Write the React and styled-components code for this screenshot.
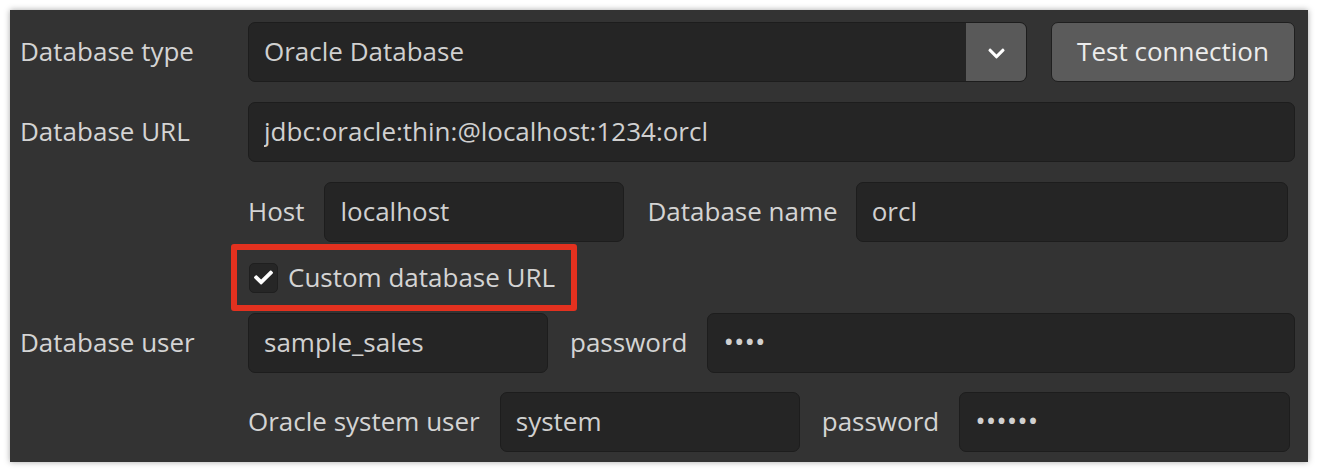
import React from 'react';
import styled, { createGlobalStyle } from 'styled-components';
import { FaCheck, FaChevronDown } from 'react-icons/fa';

const GlobalStyle = createGlobalStyle`
  html, body {
    margin: 0;
    padding: 0;
    background: #ffffff;
  }
  * {
    box-sizing: border-box;
  }
`;

const Panel = styled.div`
  margin: 10px;
  width: 1298px;
  height: 452px;
  background: #333333;
  box-shadow: 0 0 6px rgba(0, 0, 0, 0.35);
  padding: 12px 13px 10px 10px;
  display: flex;
  flex-direction: column;
  font-family: 'Open Sans', 'Liberation Sans', sans-serif;
  font-size: 26px;
  color: #d2d2d2;
`;

const Row = styled.div`
  display: grid;
  grid-template-columns: 228px minmax(0, 1fr);
  align-items: center;
  height: 60px;
  margin-top: ${(p) => p.$gap ?? 20}px;
`;

const RowLabel = styled.div`
  color: #d4d4d4;
  white-space: nowrap;
  padding-bottom: 2px;
`;

const Fields = styled.div`
  display: flex;
  align-items: center;
  height: 100%;
  min-width: 0;
  margin-right: ${(p) => p.$inset || 0}px;
`;

const InlineLabel = styled.span`
  color: #d4d4d4;
  white-space: nowrap;
  margin-left: ${(p) => p.$gap ?? 22}px;
  margin-right: ${(p) => p.$after ?? 20}px;
  padding-bottom: 2px;

  &:first-child {
    margin-left: 0;
  }
`;

const Input = styled.input`
  height: 100%;
  width: ${(p) => (p.$width ? `${p.$width}px` : '0')};
  flex: ${(p) => (p.$width ? '0 0 auto' : '1 1 0')};
  min-width: 0;
  background: #252525;
  border: 1px solid #1d1d1d;
  border-radius: 7px;
  padding: 0 15px 2px;
  font: inherit;
  color: #d0d0d0;
  outline: none;
`;

const Dots = styled(Input)`
  font-size: 28px;
  letter-spacing: 0;
  padding-bottom: 5px;
`;

const Select = styled.div`
  flex: 1 1 0;
  height: 100%;
  display: flex;
  background: #252525;
  border: 1px solid #1d1d1d;
  border-radius: 7px;
  overflow: hidden;
`;

const SelectValue = styled.div`
  flex: 1;
  display: flex;
  align-items: center;
  padding: 0 15px 2px;
  color: #d0d0d0;
`;

const SelectToggle = styled.div`
  width: 60px;
  display: flex;
  align-items: center;
  justify-content: center;
  background: #595959;
  color: #ffffff;
  padding-top: 2px;
`;

const Button = styled.button`
  margin-left: 24px;
  width: 244px;
  height: 100%;
  background: #5b5b5b;
  border: 1px solid #1f1f1f;
  border-radius: 7px;
  font: inherit;
  color: #ececec;
  padding: 0 0 2px;
`;

const Highlight = styled.div`
  margin: 2px 0 0 211px;
  width: 346px;
  height: 67px;
  border: 6px solid #e3311f;
  border-radius: 3px;
  display: flex;
  align-items: center;
  padding-left: 12px;
  gap: 10px;
`;

const CheckBox = styled.span`
  width: 29px;
  height: 30px;
  border-radius: 5px;
  background: #262626;
  border: 1px solid #1f1f1f;
  display: flex;
  align-items: center;
  justify-content: center;
  color: #ffffff;
`;

const CheckText = styled.span`
  color: #d4d4d4;
  padding-bottom: 2px;
`;

export default function App() {
  return (
    <>
      <GlobalStyle />
      <Panel>
        <Row $gap={0}>
          <RowLabel>Database type</RowLabel>
          <Fields>
            <Select>
              <SelectValue>Oracle Database</SelectValue>
              <SelectToggle>
                <FaChevronDown size={19} />
              </SelectToggle>
            </Select>
            <Button>Test connection</Button>
          </Fields>
        </Row>

        <Row>
          <RowLabel>Database URL</RowLabel>
          <Fields>
            <Input readOnly value="jdbc:oracle:thin:@localhost:1234:orcl" />
          </Fields>
        </Row>

        <Row>
          <RowLabel />
          <Fields $inset={7}>
            <InlineLabel>Host</InlineLabel>
            <Input $width={300} readOnly value="localhost" />
            <InlineLabel $gap={23} $after={18}>Database name</InlineLabel>
            <Input readOnly value="orcl" />
          </Fields>
        </Row>

        <Highlight>
          <CheckBox>
            <FaCheck size={19} />
          </CheckBox>
          <CheckText>Custom database URL</CheckText>
        </Highlight>

        <Row $gap={2}>
          <RowLabel>Database user</RowLabel>
          <Fields>
            <Input $width={300} readOnly value="sample_sales" />
            <InlineLabel>password</InlineLabel>
            <Dots readOnly value="••••" />
          </Fields>
        </Row>

        <Row $gap={19}>
          <RowLabel />
          <Fields $inset={5}>
            <InlineLabel>Oracle system user</InlineLabel>
            <Input $width={300} readOnly value="system" />
            <InlineLabel>password</InlineLabel>
            <Dots readOnly value="••••••" />
          </Fields>
        </Row>
      </Panel>
    </>
  );
}
